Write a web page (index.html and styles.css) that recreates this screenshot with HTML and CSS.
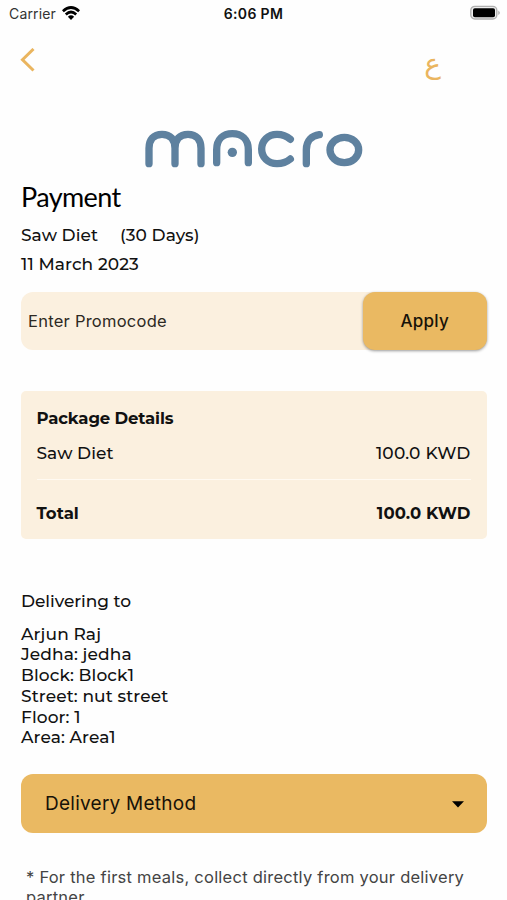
FILE: index.html
```html
<!DOCTYPE html>
<html lang="en">
<head>
<meta charset="utf-8">
<title>Payment</title>
<link rel="stylesheet" href="styles.css">
</head>
<body>
<div class="screen">
  <header class="status">
    <div class="carrier"><span class="carrier-name">Carrier</span>
      <svg class="wifi" viewBox="0 0 18 14" width="18" height="14"><g fill="none" stroke="#000" stroke-width="2.7"><path d="M.9 5.2Q9-2.2 17.1 5.2"/><path d="M3.8 8.4Q9 3.6 14.2 8.4"/></g><path d="M5.9 10.7Q9 8 12.1 10.7L9 13.9Z"/></svg>
    </div>
    <div class="time">6:06 PM</div>
    <svg class="battery" viewBox="0 0 32 16" width="32" height="16"><rect x="1.8" y="1.4" width="26" height="12.6" rx="4" fill="#eee" stroke="#b0b0b0" stroke-width="1.4"/><rect x="4" y="3.2" width="22" height="9" rx="1.8"/><path d="M29.3 5.4q3 2.3 0 4.6z" fill="#aaa"/></svg>
  </header>
  <nav class="topbar">
    <svg class="back" viewBox="0 0 16 24" width="16" height="24"><path d="M14.5 1 3.5 11.7l11 10.8" fill="none" stroke="#eab55f" stroke-width="3"/></svg>
    <span class="lang" lang="ar">ع</span>
  </nav>
  <svg class="logo" viewBox="36 36 672 132" width="224" height="44" role="img" aria-label="macro"><g fill="none" stroke="#5e819f" stroke-width="22" stroke-linecap="round"><path d="M57 146V100C57 73 71 58 96 58S135 73 135 100V146M135 100C135 73 149 58 174 58S213 73 213 100V146"/><path d="M260 143V104C260 73 279 56 307 56S355 73 355 104V143"/><path d="M481 73Q464 58 441 58C414 58 395 77 395 102S414 146 441 146Q464 146 481 132"/><path d="M529 146V104C529 77 545 62 568 59"/><ellipse cx="643" cy="105" rx="43" ry="38"/></g><circle cx="307" cy="112" r="14" fill="#5e819f"/></svg>
  <main>
    <h1>Payment</h1>
    <div class="plan geo"><span>Saw Diet</span><span>(30 Days)</span></div>
    <div class="date geo">11 March 2023</div>
    <div class="promo"><span class="hint">Enter Promocode</span><button class="apply">Apply</button></div>
    <section class="package geo">
      <h2>Package Details</h2>
      <div class="row"><span>Saw Diet</span><span class="price">100.0 KWD</span></div>
      <div class="row total"><span>Total</span><span class="sum">100.0 KWD</span></div>
    </section>
    <section class="address geo">
      <h3>Delivering to</h3>
      <p>Arjun Raj</p>
      <p>Jedha: jedha</p>
      <p>Block: Block1</p>
      <p>Street: nut street</p>
      <p>Floor: 1</p>
      <p>Area: Area1</p>
    </section>
    <div class="method"><span>Delivery Method</span><svg viewBox="0 0 12 7" width="12" height="7"><path d="M0 .3h12L6 6.5z"/></svg></div>
    <p class="note">* For the first meals, collect directly from your delivery partner</p>
  </main>
</div>
</body>
</html>
```
FILE: styles.css
```css
* { box-sizing: border-box; }
body { margin: 0; background: #fefefe; color: #111; font-family: Inter, "Liberation Sans", sans-serif; }
h1, h2, h3, p { margin: 0; font-size: inherit; font-weight: inherit; }
svg { display: block; flex: none; }
.screen { width: 507px; height: 900px; overflow: hidden; }
.status { height: 28px; padding: 0 6px 0 9px; display: grid; grid-template-columns: 1fr auto 1fr; align-items: center; }
.carrier { display: flex; align-items: center; gap: 6px; margin-top: -1px; font-size: 14px; color: #333; }
.carrier-name { letter-spacing: .15px; }
.wifi { margin-top: -1px; }
.time { font-size: 14px; font-weight: 600; letter-spacing: .35px; color: #111; padding-right: 3px; margin-top: -1px; }
.battery { justify-self: end; margin-top: -2px; }
.topbar { height: 94px; padding: 20px 66px 0 19px; display: flex; justify-content: space-between; align-items: flex-start; }
.lang { font: 28px/32px "DejaVu Sans", sans-serif; color: #eab55f; }
.logo { margin: 5px 0 0 142px; }
main { padding: 0 20px 0 21px; }
.geo { font-family: Montserrat, Inter, "Liberation Sans", sans-serif; font-size: 17px; font-weight: 500; letter-spacing: .05px; }
h1 { height: 46px; margin-top: 5px; line-height: 41px; font-family: Lato, sans-serif; font-size: 27px; letter-spacing: -.6px; color: #000; }
.plan, .date { height: 29px; line-height: 28px; display: flex; }
.plan { gap: 22px; margin-top: -1px; }
.date { letter-spacing: .1px; }
.promo { margin: 13px 0 0 -.5px; height: 58px; display: flex; align-items: center; justify-content: space-between; background: #fbf0df; border-radius: 12px; padding-left: 7.5px; }
.hint { font-size: 16.5px; color: #2d2923; letter-spacing: .25px; }
.apply { width: 124.5px; height: 58px; border: 0; border-radius: 12px; background: #eab962; box-shadow: 0 1px 3px #0006; font: 500 17px Inter, sans-serif; letter-spacing: .3px; color: #171208; }
.package { margin: 41px 0 0 -.5px; height: 147.5px; padding: 13px 16px; background: #fbf0df; border-radius: 5px; }
.package h2 { height: 36px; line-height: 28px; font-size: 16.5px; font-weight: 700; letter-spacing: -.15px; }
.row { height: 40px; line-height: 27px; display: flex; justify-content: space-between; border-bottom: 1.5px solid #fffaf2; }
.row.total { height: 56px; line-height: 66px; font-size: 16.5px; font-weight: 700; border: 0; }
.price { letter-spacing: .2px; padding-right: .5px; }
.sum { letter-spacing: .1px; padding-right: .5px; }
.address { margin-top: 52px; }
.address h3 { height: 33px; line-height: 21px; letter-spacing: -.05px; }
.address p { height: 20.8px; line-height: 21px; letter-spacing: .1px; }
.method { margin: 25.5px 0 0 -.5px; height: 59.5px; padding: 0 23px 0 24.5px; display: flex; align-items: center; justify-content: space-between; background: #eab962; border-radius: 12px; font-size: 19px; letter-spacing: .25px; color: #171208; }
.method svg { margin-top: 1px; }
.note { margin-top: 34px; padding: 0 10px 0 5px; font-size: 16.5px; line-height: 20px; color: #444; letter-spacing: .24px; }
```
